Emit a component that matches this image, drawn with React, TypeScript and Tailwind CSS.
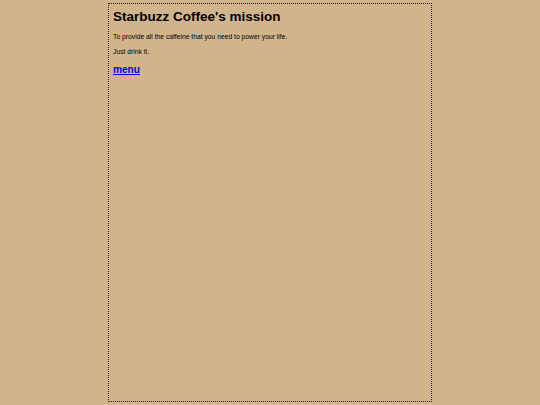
export default function App() {
  return (
    <div className="w-[540px] h-[405px] bg-[#d2b48c] pt-[3px] overflow-hidden" style={{ fontFamily: '"Liberation Sans", Arial, sans-serif' }}>
      <div className="mx-auto w-[324px] h-[399px] border border-dotted border-[#2a2016] px-[4px] text-[6.75px] leading-[1.15] text-black">
        <h1 className="text-[13.5px] font-bold leading-[1.15] mt-[4.5px] mb-[8.5px]">Starbuzz Coffee's mission</h1>
        <p className="mb-[7.5px]">To provide all the caffeine that you need to power your life.</p>
        <p>Just drink it.</p>
        <h2 className="text-[10.1px] font-bold leading-[1.15] mt-[8px]">
          <a href="#" className="text-[#0000ee] underline">menu</a>
        </h2>
      </div>
    </div>
  );
}
